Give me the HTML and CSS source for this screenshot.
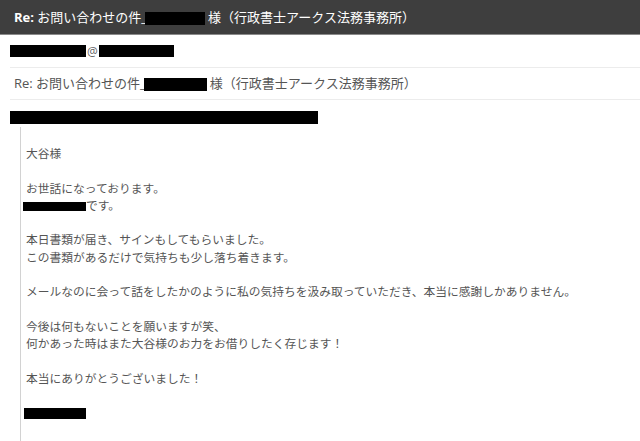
FILE: index.html
```html
<!DOCTYPE html>
<html lang="ja">

<head>
    <meta charset="utf-8">
    <meta name="viewport" content="width=device-width, initial-scale=1.0">
    <title>Re: お問い合わせの件</title>
    <link rel="stylesheet" href="styles.css">
</head>

<body>
    <div class="subject-bar">
        <span class="re">Re:</span> お問い合わせの件_<span class="redact redact-subject"></span>様（行政書士アークス法務事務所）
    </div>

    <div class="meta">
        <div class="from-row">
            <span class="redact redact-user"></span>@<span class="redact redact-domain"></span>
        </div>
        <div class="subject-row">
            Re: お問い合わせの件_<span class="redact redact-subject"></span>様（行政書士アークス法務事務所）
        </div>
    </div>

    <div class="mail-body">
        <div class="redact redact-head"></div>
        <div class="quote">
            <p>大谷様</p>
            <p>お世話になっております。<br><span class="redact redact-name"></span>です。</p>
            <p>本日書類が届き、サインもしてもらいました。<br>この書類があるだけで気持ちも少し落ち着きます。</p>
            <p>メールなのに会って話をしたかのように私の気持ちを汲み取っていただき、本当に感謝しかありません。</p>
            <p>今後は何もないことを願いますが笑、<br>何かあった時はまた大谷様のお力をお借りしたく存じます！</p>
            <p>本当にありがとうございました！</p>
            <p><span class="redact redact-sign"></span></p>
        </div>
    </div>
</body>

</html>
```

FILE: styles.css
```css
html {
    font-family: "Open Sans", "Noto Sans CJK JP", sans-serif;
}

body {
    margin: 0;
    background-color: white;
    color: #444444;
}

.redact {
    display: inline-block;
    background-color: black;
    vertical-align: middle;
}

.subject-bar {
    height: 34px;
    line-height: 34px;
    padding-left: 14px;
    background-color: #3e3e3e;
    border-bottom: 1px solid #8a8a8a;
    color: white;
    font-size: 13px;
    white-space: nowrap;
}

.subject-bar .re {
    font-weight: bold;
}

.redact-subject {
    width: 60px;
    height: 13px;
    margin-left: -2px;
    margin-right: 3px;
}

.meta {
    margin-left: 10px;
}

.from-row {
    height: 32px;
    display: flex;
    align-items: center;
    font-size: 12px;
    color: #666666;
    border-bottom: 1px solid #ececec;
}

.redact-user {
    width: 76px;
    height: 12px;
    margin-right: 1px;
}

.redact-domain {
    width: 75px;
    height: 12px;
    margin-left: 1px;
}

.subject-row {
    height: 31px;
    line-height: 31px;
    padding-left: 4px;
    font-size: 13px;
    color: #555555;
    border-bottom: 1px solid #ececec;
    white-space: nowrap;
}

.subject-row .redact-subject {
    width: 63px;
}

.mail-body {
    padding-left: 10px;
}

.redact-head {
    display: block;
    width: 308px;
    height: 13px;
    margin-top: 11px;
}

.quote {
    margin: 3px 0 0 10px;
    padding: 18px 0 30px 5px;
    border-left: 1px solid #d2d2d2;
    font-size: 11.75px;
    line-height: 17.28px;
    color: #555555;
}

.quote p {
    margin: 0 0 17.28px;
}

.redact-name {
    width: 63px;
    height: 9px;
    margin-left: -3px;
}

.redact-sign {
    width: 62px;
    height: 11px;
    margin-left: -2px;
}
```
